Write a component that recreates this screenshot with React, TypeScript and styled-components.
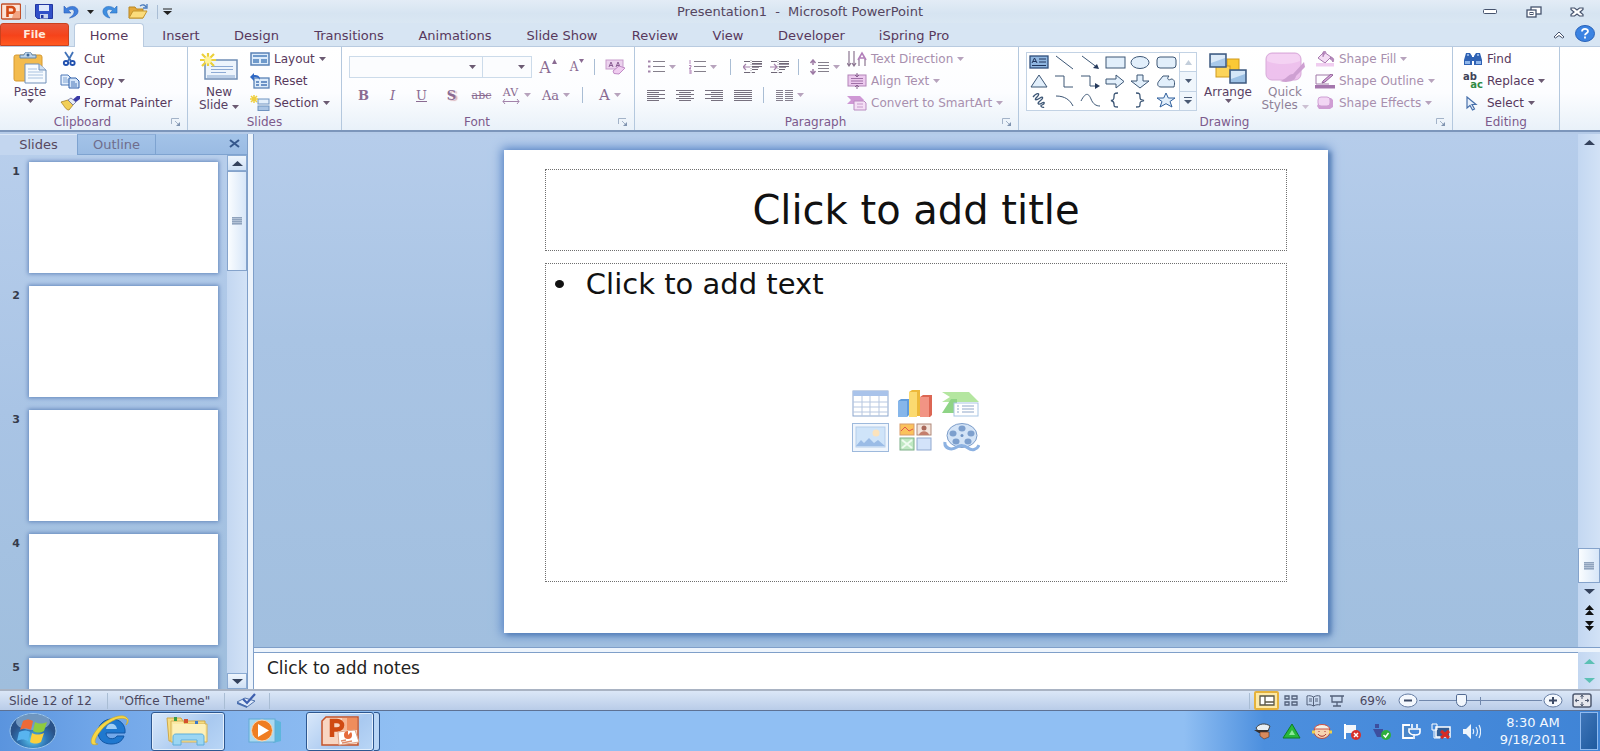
import React from 'react';
import styled, { createGlobalStyle, css } from 'styled-components';

const GlobalStyle = createGlobalStyle`
  * { box-sizing: border-box; }
  body { margin: 0; font-family: "DejaVu Sans", Verdana, sans-serif; font-size: 12px; color: #573f63; }
  button, select, textarea, input { font: inherit; color: inherit; margin: 0; }
  button { border: 0; padding: 0; background: none; cursor: pointer; }
`;

/* ---------- shell ---------- */

const Window = styled.div`
  display: flex;
  flex-direction: column;
  height: 100vh;
  min-height: 560px;
  overflow: hidden;
  background: #d5e4f2;
`;

const TitleBar = styled.header`
  display: grid;
  grid-template-columns: 1fr auto 1fr;
  align-items: center;
  flex: none;
  height: 23px;
  background: linear-gradient(#e3ecf6, #d6e4f1 60%, #dae7f3);
`;

const QuickAccess = styled.div`
  display: flex;
  align-items: center;
`;

const QuickButton = styled.button<{ $w: number }>`
  display: flex;
  align-items: center;
  justify-content: center;
  width: ${p => p.$w}px;
  height: 22px;
`;

const Divider = styled.span<{ $h?: number; $m?: number }>`
  flex: none;
  width: 1px;
  height: ${p => p.$h ?? 16}px;
  margin: 0 ${p => p.$m ?? 4}px;
  background: #a9bdd4;
`;

const WindowTitle = styled.h1`
  margin: 0;
  font-size: 13px;
  font-weight: normal;
  white-space: pre;
  color: #54455f;
`;

const Caption = styled.div`
  display: flex;
  justify-content: flex-end;
  padding-right: 3px;
`;

/* ---------- tabs ---------- */

const TabRow = styled.nav`
  display: flex;
  flex: none;
  height: 24px;
  background: #d7e5f3;
  border-bottom: 1px solid #b9cbe0;
`;

const FileTab = styled.button`
  width: 69px;
  height: 23px;
  margin-right: 5px;
  color: #ffe9dc;
  font-weight: bold;
  font-size: 11px;
  border: 1px solid #c9421f;
  border-radius: 3px 3px 0 0;
  background: linear-gradient(#e9573a, #f6431a 55%, #ff5a22);
`;

const Tab = styled.button<{ $w: number; $active?: boolean }>`
  width: ${p => p.$w}px;
  height: 24px;
  border-radius: 4px 4px 0 0;
  font-size: 13px;
  color: #57385c;
  ${p => p.$active && css`
    background: #fff;
    border: 1px solid #b9cbe0;
    border-bottom: 0;
  `}
`;

const TabTools = styled.div`
  display: flex;
  align-items: center;
  gap: 10px;
  margin-left: auto;
  padding-right: 5px;
`;

/* ---------- ribbon ---------- */

const Ribbon = styled.section`
  display: flex;
  flex: none;
  height: 85px;
  background: linear-gradient(#fff, #fcfdff 55%, #e9f1f9);
  border-bottom: 2px solid #7c96bb;
`;

const Group = styled.div<{ $w: number }>`
  display: flex;
  flex-direction: column;
  flex: none;
  width: ${p => p.$w}px;
  border-right: 1px solid #b4c8de;
`;

const GroupBody = styled.div<{ $pad?: number }>`
  display: flex;
  flex: 1;
  min-height: 0;
  padding: 1px 0 0 ${p => p.$pad ?? 0}px;
`;

const GroupFooter = styled.div`
  display: flex;
  align-items: center;
  height: 16px;
  color: #7c5a8c;
`;

const GroupName = styled.span`
  flex: 1;
  text-align: center;
`;

const Launcher = styled.button`
  display: flex;
  justify-content: center;
  width: 22px;
`;

const BigButton = styled.button<{ $w: number; $off?: boolean }>`
  display: flex;
  flex-direction: column;
  align-items: center;
  width: ${p => p.$w}px;
  padding-top: 2px;
  line-height: 13px;
  white-space: nowrap;
  opacity: ${p => (p.$off ? 0.65 : 1)};
`;

const BigIcon = styled.span`
  display: flex;
  align-items: center;
  justify-content: center;
  height: 36px;
`;

const Stack = styled.div<{ $indent?: number }>`
  display: flex;
  flex-direction: column;
  padding-left: ${p => p.$indent ?? 0}px;
`;

const RowButton = styled.button<{ $off?: boolean }>`
  display: flex;
  align-items: center;
  gap: 4px;
  height: 22px;
  white-space: nowrap;
  color: ${p => (p.$off ? '#a88fae' : '#57385c')};
`;

const ToolRows = styled.div<{ $w: number }>`
  display: flex;
  flex-direction: column;
  width: ${p => p.$w}px;
  padding-top: 6px;
  gap: 2px;
`;

const ToolRow = styled.div`
  display: flex;
  align-items: center;
  height: 26px;
`;

const Tool = styled.button<{ $w: number }>`
  display: flex;
  align-items: center;
  justify-content: center;
  gap: 4px;
  width: ${p => p.$w}px;
  height: 24px;
  color: #8a6b92;
`;

const FontSizeTool = styled(Tool)`
  gap: 1px;
  svg { align-self: flex-start; margin-top: 4px; }
`;

const Letter = styled.span<{ $size?: number; $bold?: boolean; $italic?: boolean; $line?: string; $shadow?: boolean }>`
  font-family: "DejaVu Serif", serif;
  font-size: ${p => p.$size ?? 13}px;
  font-weight: ${p => (p.$bold ? 'bold' : 'normal')};
  font-style: ${p => (p.$italic ? 'italic' : 'normal')};
  text-decoration: ${p => p.$line ?? 'none'};
  text-shadow: ${p => (p.$shadow ? '2px 1px 1px #d8b0b8' : 'none')};
`;

const SpacingGlyph = styled.span`
  display: flex;
  flex-direction: column;
  align-items: center;
  line-height: 12px;
`;

const Combo = styled.label<{ $w: number }>`
  position: relative;
  display: flex;
  align-items: center;
  width: ${p => p.$w}px;
  height: 22px;
  border: 1px solid #ccdbea;
  background: #fbfcfe;
  & + & { border-left: 0; }
  select {
    appearance: none;
    width: 100%;
    height: 20px;
    border: 0;
    background: none;
    outline: 0;
  }
  svg { position: absolute; right: 6px; pointer-events: none; }
`;

const Gallery = styled.div`
  display: flex;
  flex: none;
  width: 171px;
  height: 59px;
  margin-top: 4px;
  border: 1px solid #c2d2e4;
  background: #fff;
`;

const GalleryGrid = styled.div`
  display: grid;
  flex: 1;
  grid-template-columns: repeat(6, 1fr);
  grid-template-rows: repeat(3, 1fr);
`;

const GalleryCell = styled.button`
  display: flex;
  align-items: center;
  justify-content: center;
`;

const GalleryNav = styled.div`
  display: flex;
  flex-direction: column;
  width: 17px;
  border-left: 1px solid #c2d2e4;
  button {
    display: flex;
    flex: 1;
    align-items: center;
    justify-content: center;
  }
  button + button { border-top: 1px solid #c2d2e4; background: #f0f6fc; }
`;

/* ---------- workspace ---------- */

const Workspace = styled.main`
  display: flex;
  flex: 1;
  min-height: 0;
  padding-top: 2px;
  background: #b5cbe8;
`;

const SidePanel = styled.aside`
  display: flex;
  flex-direction: column;
  flex: none;
  width: 248px;
  border-right: 1px solid #7f9fc9;
  background: linear-gradient(#b9cfec, #a9c4e5 50%, #9fbedd);
`;

const SideTabs = styled.div`
  display: flex;
  flex: none;
  height: 21px;
`;

const SideTab = styled.button<{ $w: number; $active?: boolean }>`
  width: ${p => p.$w}px;
  font-size: 13px;
  line-height: 16px;
  color: ${p => (p.$active ? '#57485f' : '#6f6d8c')};
  ${p => p.$active
    ? css`background: #c3d6ef; border-top: 1px solid #dbe7f6;`
    : css`background: linear-gradient(#a3c3e8, #9abbe3); border: 1px solid #7ea3d0; border-top-color: #8fb0da;`}
`;

const SideTabFill = styled.div`
  display: flex;
  flex: 1;
  align-items: center;
  justify-content: flex-end;
  padding-right: 7px;
  background: linear-gradient(#a3c3e8, #9abbe3);
  border-bottom: 1px solid #7ea3d0;
`;

const SideBody = styled.div`
  display: flex;
  flex: 1;
  min-height: 0;
`;

const Thumbs = styled.ol`
  flex: 1;
  margin: 0;
  padding: 7px 9px 0 0;
  list-style: none;
  overflow: hidden;
`;

const ThumbItem = styled.li`
  display: flex;
  align-items: flex-start;
  margin-bottom: 13px;
`;

const ThumbNumber = styled.span`
  width: 29px;
  padding: 2px 9px 0 0;
  text-align: right;
  font-weight: bold;
  font-size: 11px;
  line-height: 16px;
  color: #363b4c;
`;

const Thumb = styled.button`
  flex: 1;
  height: 111px;
  background: #fff;
  box-shadow: 0 0 4px 1px #6488bd;
`;

const ScrollTrack = styled.div<{ $w: number }>`
  display: flex;
  flex-direction: column;
  align-items: stretch;
  flex: none;
  width: ${p => p.$w}px;
  background: linear-gradient(90deg, #c3d7f1, #d2e2f6);
`;

const ScrollButton = styled.button<{ $boxed?: boolean; $h?: number }>`
  display: flex;
  align-items: center;
  justify-content: center;
  flex: none;
  height: ${p => p.$h ?? 16}px;
  ${p => p.$boxed && css`
    border: 1px solid #8aaad2;
    background: linear-gradient(#eef5fd, #cfe0f5);
  `}
`;

const ScrollThumb = styled.div<{ $h: number }>`
  display: flex;
  align-items: center;
  justify-content: center;
  flex: none;
  height: ${p => p.$h}px;
  border: 1px solid #85a3cb;
  background: linear-gradient(90deg, #fafdff, #d7e6f8);
`;

const Grip = styled.span`
  width: 10px;
  height: 8px;
  background: repeating-linear-gradient(#8fa3bd 0 1px, #b3c2d6 1px 2px);
`;

const Spacer = styled.div`
  flex: 1;
`;

const Editor = styled.div`
  display: flex;
  flex-direction: column;
  flex: 1;
  min-width: 0;
  margin-left: 5px;
  border-left: 1px solid #7f9fc9;
  box-shadow: -5px 0 0 #edf4fc;
`;

const CanvasRow = styled.div`
  display: flex;
  flex: 1;
  min-height: 0;
`;

const Canvas = styled.div`
  display: flex;
  flex: 1;
  justify-content: center;
  padding: 16px 0 14px;
  background: linear-gradient(#b6cdeb, #a9c4e4 40%, #a1bfdf);
`;

const Slide = styled.article`
  display: flex;
  flex-direction: column;
  gap: 12px;
  height: 100%;
  aspect-ratio: 826 / 484;
  padding: 19px 41px 51px;
  background: #fff;
  box-shadow: 0 0 10px 2px #5684c6, 3px 2px 4px #5f7fa8;
`;

const TitlePlaceholder = styled.h2`
  display: flex;
  align-items: center;
  justify-content: center;
  flex: none;
  height: 82px;
  margin: 0;
  border: 1px dotted #6f6f6f;
  font-size: 40px;
  font-weight: normal;
  color: #111;
`;

const BodyPlaceholder = styled.div`
  display: flex;
  flex-direction: column;
  flex: 1;
  border: 1px dotted #6f6f6f;
  color: #111;
`;

const Bullets = styled.ul`
  margin: 0;
  padding: 0 0 0 9px;
  list-style: none;
  font-size: 29px;
  line-height: 40px;
  li { display: flex; align-items: center; gap: 22px; }
  li::before { content: ''; width: 9px; height: 8px; border-radius: 50%; background: #111; }
`;

const InsertGrid = styled.div`
  display: grid;
  grid-template-columns: repeat(3, 45px);
  grid-template-rows: repeat(2, 34px);
  align-self: center;
  margin-top: 83px;
  button { display: flex; align-items: center; justify-content: center; }
`;

const NotesRow = styled.div`
  display: flex;
  flex: none;
  height: 42px;
  border-top: 1px solid #7f9fc9;
  background: #edf4fc;
  padding-top: 4px;
`;

const Notes = styled.textarea`
  flex: 1;
  padding: 5px 13px;
  border: 0;
  border-top: 1px solid #7f9fc9;
  outline: 0;
  resize: none;
  overflow: hidden;
  background: #fff;
  color: #222;
  font-size: 17px;
  line-height: 21px;
`;

/* ---------- status bar ---------- */

const StatusBar = styled.footer`
  display: flex;
  align-items: center;
  flex: none;
  height: 22px;
  padding-left: 9px;
  border-top: 2px solid #a9b3c3;
  border-bottom: 1px solid #5d7193;
  background: linear-gradient(#dbe7f7, #b9cce8);
  color: #4a4760;
`;

const StatusText = styled.span<{ $w: number; $indent?: number }>`
  width: ${p => p.$w}px;
  padding-left: ${p => p.$indent ?? 0}px;
  white-space: nowrap;
`;

const StatusButton = styled.button<{ $w: number; $active?: boolean }>`
  display: flex;
  align-items: center;
  justify-content: center;
  width: ${p => p.$w}px;
  height: 19px;
  font-size: 12px;
  ${p => p.$active && css`
    border: 2px solid #e5b23c;
    border-radius: 2px;
    background: #fde9a6;
  `}
`;

const Zoom = styled.input`
  appearance: none;
  width: 123px;
  height: 14px;
  background: linear-gradient(#7188ad, #7188ad) center / 100% 1px no-repeat,
    linear-gradient(#7188ad, #7188ad) center / 1px 8px no-repeat;
  &::-webkit-slider-thumb {
    appearance: none;
    width: 11px;
    height: 13px;
    border: 1px solid #536b93;
    border-radius: 2px 2px 6px 6px;
    background: #f2f7fd;
  }
`;

/* ---------- taskbar ---------- */

const Taskbar = styled.footer`
  display: flex;
  align-items: center;
  flex: none;
  height: 40px;
  background: linear-gradient(90deg, #5a94de 0, #6fa5e8 90px, #86b6ef 240px, #90bff3 400px, #90bff3 74%, #4c8fde 79%, #3f84d6 100%);
`;

const TaskButton = styled.button<{ $w: number; $open?: boolean }>`
  display: flex;
  align-items: center;
  justify-content: center;
  flex: none;
  width: ${p => p.$w}px;
  height: 39px;
  ${p => p.$open && css`
    border: 1px solid #2d5790;
    border-radius: 3px;
    background: linear-gradient(135deg, #d9e8fa, #a9c9f0 60%, #b9d6f6);
    box-shadow: inset 0 0 0 1px #e3effc;
  `}
`;

const StackEdge = styled.span`
  width: 6px;
  height: 39px;
  border: 1px solid #2d5790;
  border-left: 0;
  border-radius: 0 3px 3px 0;
  background: #b9d6f6;
`;

const Tray = styled.div`
  display: flex;
  align-items: center;
  margin-left: auto;
`;

const Clock = styled.time`
  width: 94px;
  text-align: center;
  line-height: 17px;
  font-size: 13px;
  color: #f4f9ff;
  span { display: block; }
`;

const ShowDesktop = styled.button`
  width: 18px;
  height: 38px;
  margin-right: 2px;
  border: 1px solid #8fbaf0;
  background: linear-gradient(120deg, #3f76b9, #1f5a9f);
`;

/* ---------- icons ---------- */

const Svg = styled.svg`
  flex: none;
  fill: none;
`;

type IconProps = { w: number; h: number; children: React.ReactNode };
const Icon = ({ w, h, children }: IconProps) => (
  <Svg width={w} height={h} viewBox={`0 0 ${w} ${h}`} aria-hidden="true">{children}</Svg>
);

const Down = ({ c = '#6b5a72' }: { c?: string }) => <Icon w={7} h={4}><path d="M0 0h7L3.500 4z" fill={c} /></Icon>;
const Up = ({ c = '#34425c', w = 11 }: { c?: string; w?: number }) => (
  <Icon w={w} h={5}><path d={`M0 5h${w}L${w / 2} 0z`} fill={c} /></Icon>
);
const DownWide = ({ c = '#34425c' }: { c?: string }) => <Icon w={11} h={5}><path d="M0 0h11L5.500 5z" fill={c} /></Icon>;

const AppIcon = () => (
  <Icon w={20} h={17}>
    <rect x=".5" y="1" width="19" height="15" rx="1" fill="#fbe3d6" stroke="#c2512a" strokeWidth="1.300" />
    <path d="M13 8h6v7h-8z" fill="#f3a583" />
    <path d="M6.500 14V4h4a3 2.800 0 0 1 0 5.800H7" stroke="#d24a16" strokeWidth="2.600" />
  </Icon>
);
const SaveIcon = () => (
  <Icon w={18} h={15}>
    <path d="M.5.5h17v14h-15l-2-2z" fill="#3150c8" stroke="#2337a0" />
    <path d="M4 1h10v6H4z" fill="#dfe9fb" /><path d="M5 10h8v4.500H5z" fill="#c9d4ee" /><path d="M6 11h2.500v3H6z" fill="#2337a0" />
  </Icon>
);
const UndoIcon = () => (
  <Icon w={16} h={14}><path d="M1 1v7h7L5.500 5.500C9 3 12 5 11 8c-.6 2-2.500 3.500-4.500 5C12 12 15.500 9 15 5.500 14 1 8 0 3.500 3.500z" fill="#3f7fdc" stroke="#2a5cb8" strokeWidth=".6" /></Icon>
);
const RedoIcon = () => (
  <Icon w={16} h={14}><path d="M15 1v7H8l2.500-2.500C7 3 4 5 5 8c.6 2 1.500 3 3 5C3 12 .5 9 1 5.500 2 1 8 0 12.500 3.500z" fill="#3f8fe0" stroke="#2a6cc0" strokeWidth=".6" /></Icon>
);
const OpenIcon = () => (
  <Icon w={21} h={15}>
    <path d="M1 14V3h6l1.500 2H15v9z" fill="#e3a93c" stroke="#b98722" /><path d="M1 14l4-7h14l-4 7z" fill="#fbdc7c" stroke="#c4952d" />
    <path d="M12 2c3-2 5-1 6 1M19 0v4h-4" stroke="#4a7bbd" strokeWidth="1.300" />
  </Icon>
);
const PasteIcon = () => (
  <Icon w={34} h={32}>
    <rect x="1" y="3" width="28" height="26" rx="2" fill="#f3bb4e" stroke="#d79a31" />
    <path d="M7 6V3h4c0-4 8-4 8 0h4v3z" fill="#bcd4ea" stroke="#5f84ab" /><circle cx="15" cy="3" r="1.500" fill="#3f6797" />
    <path d="M12 12h14l7 6v13H12z" fill="#f7fbff" stroke="#6f8fb9" /><path d="M26 12v6h7" fill="#cfe0f3" stroke="#6f8fb9" />
    <path d="M15 17h9M15 20h15M15 23h15M15 26h15" stroke="#a8c1df" />
  </Icon>
);
const CutIcon = () => (
  <Icon w={20} h={16}>
    <path d="M5 1l6 9M13 1L8 10" stroke="#4172b8" strokeWidth="1.800" />
    <ellipse cx="6" cy="12" rx="2.200" ry="2" stroke="#1f4fae" strokeWidth="1.800" /><ellipse cx="12.500" cy="12" rx="2.200" ry="2" stroke="#1f4fae" strokeWidth="1.800" />
  </Icon>
);
const CopyIcon = () => (
  <Icon w={20} h={15}>
    <path d="M1 1h7l3 3v7H1z" fill="#e4effc" stroke="#4d79b8" /><path d="M3 4h4M3 6h6M3 8h6" stroke="#7fa3d3" />
    <path d="M9 4h7l3 3v7H9z" fill="#d3e4f8" stroke="#2f5ea8" /><path d="M11 8h4M11 10h6M11 12h6" stroke="#4d79b8" />
  </Icon>
);
const BrushIcon = () => (
  <Icon w={20} h={15}>
    <path d="M1 6l7-2 5 5-4 5C6 14 5 11 1 6z" fill="#f2cf57" stroke="#a98226" strokeWidth=".8" />
    <path d="M8 4l3-2 5 4-3 3z" fill="#e7ecf5" stroke="#6b6f94" strokeWidth=".8" /><path d="M13 3.500L17 0h3v3l-4 3z" fill="#3a3aa6" />
  </Icon>
);
const NewSlideIcon = () => (
  <Icon w={38} h={30}>
    <rect x="5" y="7" width="32" height="19" fill="#edf4fc" stroke="#6f8db5" strokeWidth="1.500" /><path d="M7 22h28v3H7z" fill="#b9cde6" />
    <path d="M11 13.500h22M11 16.500h22M11 19.500h15" stroke="#8daad4" />
    <path d="M8 0v13M0 7h16M2 1l12 12M14 1L2 13" stroke="#ecd03a" strokeWidth="2.200" /><circle cx="8" cy="7" r="3.500" fill="#fff39a" />
  </Icon>
);
const LayoutIcon = () => (
  <Icon w={20} h={14}><rect x="1" y="1" width="18" height="12" fill="#dcebfa" stroke="#5982b6" strokeWidth="1.500" /><path d="M3 3h14v2H3zM3 7h6v4H3zM11 7h6v4h-6z" fill="#6f9acb" /></Icon>
);
const ResetIcon = () => (
  <Icon w={20} h={16}><rect x="4" y="5" width="15" height="10" fill="#dcebfa" stroke="#5982b6" strokeWidth="1.300" /><path d="M6 9h3M11 9h6M6 12h3M11 12h6" stroke="#4675b5" strokeWidth="1.500" /><path d="M0 4l4-4v2c4 0 6 1 6 5-1-2-3-3-6-2.500V8z" fill="#2f68c4" /></Icon>
);
const SectionIcon = () => (
  <Icon w={20} h={16}><rect x="8" y="4" width="11" height="5" fill="#e3effb" stroke="#6f93c0" /><rect x="8" y="11" width="11" height="4.500" fill="#a9c4e4" stroke="#6f93c0" /><path d="M4 0v8M0 4h8M1 1l6 6M7 1L1 7" stroke="#f0cf3e" strokeWidth="1.500" /></Icon>
);
const LauncherIcon = () => (
  <Icon w={10} h={8}><path d="M.5 6V.5H8" stroke="#a3b3c8" /><path d="M4 3l3 3" stroke="#a3b3c8" /><path d="M9 4v4H5z" fill="#8094b0" /></Icon>
);
const ClearIcon = () => (
  <Icon w={22} h={17}>
    <rect x="1" y="1" width="17" height="9" fill="#ecd3ee" stroke="#c79bcc" /><path d="M4 8l2-5 2 5M4.500 6.500h3M11 8l2-5 2 5M11.500 6.500h3" stroke="#8a5d93" />
    <path d="M8 12l6-5 6 2-6 6-5-.5z" fill="#f0cdf0" stroke="#c08bc6" />
  </Icon>
);

const lines = (rows: [number, number, number][], c = '#85808c') =>
  rows.map(([x, y, len], i) => <path key={i} d={`M${x} ${y}.5h${len}`} stroke={c} />);

const BulletIcon = () => (
  <Icon w={18} h={14}>{lines([[6, 1, 12], [6, 6, 12], [6, 11, 12]])}<path d="M1 1.500h2.500M1 6.500h2.500M1 11.500h2.500" stroke="#a283aa" strokeWidth="2" /></Icon>
);
const NumberIcon = () => (
  <Icon w={18} h={14}>{lines([[6, 1, 12], [6, 6, 12], [6, 11, 12]])}<path d="M2 0v4M1 5.500h2v1.500l-2 1.500h2M1 10h2v4H1M1 12h2" stroke="#b58abb" /></Icon>
);
const IndentIcon = ({ right }: { right?: boolean }) => (
  <Icon w={20} h={14}>
    {lines([[1, 1, 6], [9, 1, 10], [9, 3, 10], [9, 6, 10], [9, 9, 6], [1, 12, 6], [9, 12, 3]], '#6f6877')}
    <path d="M9 4.500h10M9 7.500h7" stroke="#9c94a3" />
    <path d={right ? 'M0 7h6M4 4l3 3-3 3' : 'M7 7H1M3 4L0 7l3 3'} stroke="#a27fa9" strokeWidth="1.200" /><path d="M8 0v14" stroke="#a8a2b0" strokeDasharray="1 1" />
  </Icon>
);
const LineSpaceIcon = () => (
  <Icon w={20} h={16}>{lines([[9, 3, 11], [9, 6, 11], [9, 9, 11], [9, 12, 11]])}<path d="M4 1v5M4 10v5M1.500 4L4 1l2.500 3M1.500 12L4 15l2.500-3" stroke="#9d7aa5" strokeWidth="1.500" /></Icon>
);
const AlignIcon = ({ kind }: { kind: 'l' | 'c' | 'r' | 'j' }) => (
  <Icon w={18} h={11}>
    {[0, 1, 2, 3, 4, 5].map(i => {
      const len = kind === 'j' || i % 2 === 0 ? 18 : 12;
      const x = kind === 'c' ? (18 - len) / 2 : kind === 'r' ? 18 - len : 0;
      return <path key={i} d={`M${x} ${i * 2}.5h${len}`} stroke="#77717f" />;
    })}
  </Icon>
);
const ColumnsIcon = () => (
  <Icon w={17} h={11}>{[0, 2, 4, 6, 8, 10].map(y => <path key={y} d={`M0 ${y}.5h7M9 ${y}.5h8`} stroke="#857f8d" />)}</Icon>
);
const TextDirIcon = () => (
  <Icon w={20} h={16}><path d="M2 0v14M7 0v14M0 12l2 3 2-3M5 12l2 3 2-3M12 15V8M18 15V8" stroke="#8b7691" strokeWidth="1.200" /><path d="M11 9l4-7 4 7M12.500 7h5" stroke="#b27fba" strokeWidth="1.600" /></Icon>
);
const AlignTextIcon = () => (
  <Icon w={20} h={16}><rect x="1" y="2" width="18" height="11" fill="#ecc9ee" stroke="#b184b8" /><path d="M4 5.500h12M4 8h12M4 10.500h12" stroke="#9f71a7" /><path d="M10 0v3M10 12v4M8 2l2 2 2-2M8 14l2-2 2 2" stroke="#87608f" /></Icon>
);
const SmartArtIcon = () => (
  <Icon w={20} h={16}><path d="M0 1h13l4 4-4 4H0l4-4z" fill="#cf98d5" /><path d="M7 6h10l2 2v7H7z" fill="#f4dff5" stroke="#b98bc0" /><path d="M10 9h6M10 12h6" stroke="#c59acb" /></Icon>
);
const ArrangeIcon = () => (
  <Icon w={38} h={31}>
    <rect x="18" y="6" width="12" height="12" fill="#fbc935" stroke="#cf9a1e" /><rect x="7" y="13" width="14" height="11" fill="#fcd45a" stroke="#cf9a1e" />
    <rect x="1" y="1" width="16" height="13" fill="#a9c9ea" stroke="#3d587f" strokeWidth="1.500" /><path d="M2 2h14v3L2 10z" fill="#dceaf8" />
    <rect x="21" y="17" width="16" height="13" fill="#9cc0e4" stroke="#3d587f" strokeWidth="1.500" /><path d="M22 18h14v3l-14 5z" fill="#d5e6f7" />
  </Icon>
);
const QuickIcon = () => (
  <Icon w={40} h={32}><rect x="1" y="1" width="35" height="27" rx="6" fill="#e6a2e4" stroke="#c47fc6" /><path d="M2 9c8 4 24 4 33 0V7c0-3-2-5-5-5H8C4 2 2 4 2 7z" fill="#efbcee" /><path d="M39 10L28 22l3 2 9-9zM28 22c-5 0-6 5-13 7 6 2 15 1 16-5z" fill="#b56fbb" /></Icon>
);
const FillIcon = () => (
  <Icon w={20} h={16}><path d="M9 1l7 5-6 6-7-5z" fill="#f3dcf4" stroke="#a779ae" /><path d="M8 6V1.500C8 0 11 0 11 1.500M16 6c3 1 3 3 2 5-1-2-2-3-3-3z" stroke="#a779ae" fill="#b98bc0" /><path d="M1 12h18v3.500H1z" fill="#f0cdf0" /></Icon>
);
const OutlineIcon = () => (
  <Icon w={20} h={15}><path d="M15 1H1v9h13" stroke="#a27aa9" /><path d="M18 1l-8 7-3 1 1-2 8-7z" fill="#d7a5dc" stroke="#8f6396" /><path d="M0 11h20v3.500H0z" fill="#a476ad" /></Icon>
);
const EffectsIcon = () => (
  <Icon w={20} h={14}><path d="M6 2h10l2 2v7l-3 2H4l-2-3z" fill="#cf9dd4" /><rect x="3" y="1" width="12" height="9" rx="3" fill="#f2d6f4" stroke="#cfa0d4" /></Icon>
);
const FindIcon = () => (
  <Icon w={20} h={14}>
    <path d="M3 1h4l2 3v9H1V8zM13 1h4l2 7v5h-8V4z" fill="#2f62b4" /><path d="M8 5h4v4H8z" fill="#2f62b4" />
    <path d="M2 9h5v3H2zM13 9h5v3h-5z" fill="#8fb6ea" /><path d="M4 3h2M14 3h2" stroke="#a9c8f0" strokeWidth="1.500" />
  </Icon>
);
const SelectIcon = () => (
  <Icon w={20} h={15}><path d="M4 1v11l3-2.500L9.500 14l2-1-2.500-4.500h4z" fill="#e9f1fb" stroke="#4770ab" strokeWidth="1.200" /></Icon>
);

const ReplaceGlyph = styled.span`
  display: flex;
  flex-direction: column;
  align-items: flex-end;
  width: 20px;
  font-size: 10px;
  font-weight: bold;
  line-height: 8px;
  color: #3f4258;
  span:first-child { align-self: flex-start; }
  span:last-child { color: #2f8a43; }
`;

const st = { stroke: '#3c5675', fill: '#e2effb' };
const shapes: [string, React.ReactNode][] = [
  ['Text box', <><rect x="1" y="2" width="18" height="12" fill="#8fb6e0" stroke="#2f4f7c" strokeWidth="1.300" /><path d="M3 9l2.500-5L8 9M4 7.500h3M10 5h7M10 8h7M3 11.500h14" stroke="#20355c" /></>],
  ['Line', <path d="M2 2l17 13" {...st} />],
  ['Arrow', <><path d="M2 2l16 12" {...st} /><path d="M19 15l-6-1 4-4z" fill="#263a5c" /></>],
  ['Rectangle', <rect x="1" y="3" width="19" height="11" {...st} />],
  ['Oval', <ellipse cx="10" cy="8.500" rx="9" ry="6" {...st} />],
  ['Rounded rectangle', <rect x="1" y="3" width="19" height="11" rx="3" {...st} />],
  ['Triangle', <path d="M10 2l8 12H2z" {...st} />],
  ['Elbow connector', <path d="M1 3h9v11h9" {...st} fill="none" />],
  ['Elbow arrow', <><path d="M1 3h9v10h7" {...st} fill="none" /><path d="M20 13l-5-3v6z" fill="#263a5c" /></>],
  ['Right arrow', <path d="M1 6h10V2l8 6.500-8 6.500v-4H1z" {...st} />],
  ['Down arrow', <path d="M7 2h6v6h6l-9 7-9-7h6z" {...st} />],
  ['Freeform', <path d="M5 14c-4 0-4-4-2-6l4-5h6c-3 3 0 5 2 3 4 0 4 4 3 8z" {...st} />],
  ['Scribble', <path d="M4 5c4-5 8-4 4 0-4 4 0 3 3 1s4 0 0 3-1 4 2 2 3 1 0 2 1 3 2 2" {...st} fill="none" strokeWidth="1.300" />],
  ['Arc', <path d="M2 4c9 0 14 4 17 10" {...st} fill="none" />],
  ['Curve', <path d="M1 9c5-10 8-7 10-2s5 7 9 7" {...st} fill="none" />],
  ['Left brace', <path d="M13 1c-4 0-4 1-4 4s-1 3-3 3.500c2 .5 3 1 3 3.500s0 3 4 3" {...st} fill="none" strokeWidth="1.300" />],
  ['Right brace', <path d="M6 1c4 0 4 1 4 4s1 3 4 3.500c-3 .5-4 1-4 3.500s0 3-4 3" {...st} fill="none" strokeWidth="1.300" />],
  ['Star', <path d="M10 1l2.300 5H19l-5 3.500 2 5.500-6-3.300L4 15l2-5.500L1 6h6.700z" fill="#e2effb" stroke="#2f5f9c" />],
];

const inserts: [string, React.ReactNode][] = [
  ['Insert table', <><rect x="1" y="2" width="35" height="25" fill="#fff" stroke="#8ba6cd" /><path d="M1 2h35v5H1z" fill="#a9c3ea" /><path d="M1 13h35M1 18h35M1 23h35M10 7v20M18 7v20M27 7v20" stroke="#b7c7e0" /></>],
  ['Insert chart', <><path d="M1 12l3-2h8v16l-2 2H1z" fill="#5f9bdc" /><path d="M1 12h9v16H1z" fill="#86b6ea" /><path d="M12 3l3-2h8v26H12z" fill="#edb93a" /><path d="M12 3h8v25h-8z" fill="#fbda70" /><path d="M23 8l3-2h9v20l-2 2H23z" fill="#dc6653" /><path d="M23 8h9v20h-9z" fill="#f29484" /></>],
  ['Insert SmartArt graphic', <><path d="M0 3h27l10 10H0l8-5z" fill="#b4e6a0" /><path d="M0 24l9-14h6v14z" fill="#8fd486" /><rect x="12" y="14" width="24" height="13" fill="#fff" stroke="#a9c6e4" /><path d="M15 17h2M15 20h2M15 23h2M20 17h12M20 20h12M20 23h12" stroke="#8fa6c8" /></>],
  ['Insert picture', <><rect x=".5" y=".5" width="36" height="28" fill="#f0f6fd" stroke="#9db9dc" /><rect x="4" y="4" width="29" height="20" fill="#cfe4f9" stroke="#b5cdea" /><circle cx="24" cy="10" r="3.500" fill="#fbe3bd" /><path d="M4 23l5-6 3 3 5-5 5 5 4-3 7 6z" fill="#9bbce6" /></>],
  ['Insert clip art', <><rect x="3" y="1" width="14" height="11" fill="#fbc25c" stroke="#d79b6a" /><path d="M4 8l4-4 4 4 4-2" stroke="#e0574c" /><rect x="20" y="1" width="14" height="11" fill="#f3e4dc" stroke="#b08878" /><circle cx="27" cy="5" r="2.500" fill="#a9685a" /><path d="M22 12c1-5 9-5 10 0z" fill="#c47e6c" /><rect x="3" y="15" width="14" height="12" fill="#bfe8c2" stroke="#7fb08a" /><path d="M5 17l10 8M15 17L5 25" stroke="#eefbef" strokeWidth="2" /><rect x="20" y="15" width="14" height="12" fill="#d3e3fa" stroke="#90a8cf" /></>],
  ['Insert media clip', <><ellipse cx="20" cy="12.500" rx="15" ry="12" fill="#d3e3f6" stroke="#7d9dc9" /><g fill="#7d9fcd"><ellipse cx="20" cy="5.500" rx="3.500" ry="3" /><ellipse cx="11" cy="10.500" rx="3.500" ry="3" /><ellipse cx="29" cy="10.500" rx="3.500" ry="3" /><ellipse cx="14" cy="18.500" rx="3.500" ry="3" /><ellipse cx="26" cy="18.500" rx="3.500" ry="3" /></g><circle cx="20" cy="12.500" r="1.500" fill="#6f93c4" /><path d="M3 19c-1 6 6 9 12 5 3-2 7-2 11 1s9 2 11-3" stroke="#8db2e2" strokeWidth="3" /></>],
];

const StartIcon = () => (
  <Icon w={48} h={38}>
    <defs><radialGradient id="orb" cx="50%" cy="75%"><stop offset="0" stopColor="#5fd0f2" /><stop offset=".6" stopColor="#2f74b4" /><stop offset="1" stopColor="#2a5288" /></radialGradient></defs>
    <ellipse cx="24" cy="19" rx="23" ry="17.500" fill="url(#orb)" stroke="#9cc6ec" /><ellipse cx="24" cy="10" rx="17" ry="8" fill="#a7cdec" opacity=".55" />
    <path d="M14 9c4-2 7-2 10 0l-2 9c-4-2-7-2-11 0z" fill="#ee6a37" /><path d="M26 10c4 2 7 2 12 0l-3 9c-4 2-7 2-11 0z" fill="#8fcb3e" />
    <path d="M10 20c4-2 8-2 11 0l-2 9c-4-2-7-2-11 0z" fill="#58b4ef" /><path d="M23 21c4 2 7 2 12 0l-3 9c-4 2-7 2-11 0z" fill="#fbcf3c" />
  </Icon>
);
const IeIcon = () => (
  <Icon w={42} h={34}>
    <path d="M36 22c-2 6-7 8-13 8C15 30 10 25 10 18S16 5 24 5s14 6 13 14H18c0 7 9 7 11 3z" fill="#1f78cf" stroke="#1257a5" /><path d="M18 15h11c-1-7-10-7-11 0z" fill="#9ecdf5" />
    <path d="M38 3C32-1 15 6 7 18 1 27 2 33 10 30c-4 0-4-4 1-11C18 9 30 2 38 5c2 1 1 4 0 6 3-3 3-6 0-8z" fill="#f7d746" stroke="#c9a520" strokeWidth=".6" />
  </Icon>
);
const FolderIcon = () => (
  <Icon w={46} h={32}>
    <path d="M2 3h14l2 3h22v20H4z" fill="#f6dc82" stroke="#cfa848" /><path d="M6 6h12l2 3h22v18H6z" fill="#fbe9a4" stroke="#d6b257" /><path d="M8 9h32v16H8z" fill="#fdf0ba" />
    <path d="M9 2h3v4H9z" fill="#3a9b45" /><path d="M19 4h4v4h-4z" fill="#d5502c" /><path d="M30 6h3v3h-3z" fill="#3a78c9" />
    <path d="M8 30v-8c0-2 1-3 3-3h25c2 0 3 1 3 3v8h-7v-5H16v5z" fill="#9bd6f3" stroke="#5daedb" />
  </Icon>
);
const MediaIcon = () => (
  <Icon w={36} h={28}>
    <path d="M25 2l8 3v19l-8 2z" fill="#5db6dc" /><rect x="1" y="2" width="26" height="23" fill="#a9d9f1" stroke="#62acd4" />
    <circle cx="14" cy="13.500" r="10.500" fill="#ef7d22" stroke="#fbd6b0" /><path d="M10 7v13l11-6.500z" fill="#fff" />
  </Icon>
);
const PptIcon = () => (
  <Icon w={40} h={32}>
    <path d="M6 2h32v28H2V6z" fill="#f8d6c2" stroke="#c4532a" strokeWidth="1.500" /><path d="M22 3h15v12H22z" fill="#ef8d5d" /><path d="M22 3h5v12h-5z" fill="#f6b694" />
    <path d="M12 22V6h5a5 4.200 0 0 1 0 8.500h-5" stroke="#d04a12" strokeWidth="4.500" />
    <path d="M18 17l17-2 4 12-20 3z" fill="#fff" stroke="#e0a68a" /><circle cx="28" cy="20" r="4" fill="#e66b3c" /><path d="M28 20v-4h4z" fill="#fff" /><path d="M21 26l5-1M22 28l10-2" stroke="#e08b68" strokeWidth="1.500" />
  </Icon>
);

const tray: [string, number, React.ReactNode][] = [
  ['Pirate', 29, <><path d="M3 5c3-5 10-5 14-2l-2 5H5z" fill="#e8eef3" stroke="#444" /><path d="M1 7h15l-3 3H6z" fill="#35302e" /><path d="M7 9h9v5l-5 2-4-3z" fill="#d98a5c" stroke="#5b3424" strokeWidth=".6" /></>],
  ['Download', 30, <><path d="M10 1l8 14H1z" fill="#27b83b" stroke="#0e7d24" /><path d="M10 7l3 5H7z" fill="#8be89a" /></>],
  ['Messenger', 30, <><ellipse cx="10" cy="8.500" rx="8" ry="7" fill="#f6d3b0" stroke="#b54b42" /><path d="M2 6c2-6 14-6 16 0z" fill="#f3f0e6" stroke="#c8534a" /><path d="M6 11c2 3 6 3 8 0M7 8v1M13 8v1" stroke="#a33" /><path d="M0 9h3M17 9h3" stroke="#f0d04a" strokeWidth="3" /></>],
  ['Action Center', 30, <><path d="M3 1v15" stroke="#fff" strokeWidth="2" /><path d="M4 2h10v8H4z" fill="#f3f6fa" /><circle cx="14" cy="12" r="5" fill="#d8312b" /><path d="M12 10l4 4M16 10l-4 4" stroke="#fff" strokeWidth="1.500" /></>],
  ['Update', 29, <><path d="M3 1h4v4H3zM1 6h10v8H5z" fill="#3d4f9e" /><circle cx="14" cy="12" r="5" fill="#2eae3f" /><path d="M11.500 12l2 2 3-4" stroke="#fff" strokeWidth="1.500" /></>],
  ['Power', 30, <><path d="M9 2H2v13h10" fill="#4b87c9" stroke="#fff" strokeWidth="1.800" /><path d="M11 1v4M16 1v4M8 6h11v3c0 4-9 4-11 0zM13 11v5" stroke="#fff" strokeWidth="1.600" /></>],
  ['Network', 30, <><path d="M5 4h14v10H5z" fill="#315d94" stroke="#fff" strokeWidth="1.500" /><path d="M1 1h5v6H1zM3 7v8h6" stroke="#fff" /><path d="M10 8l8 7M18 8l-8 7" stroke="#d82a24" strokeWidth="3" /></>],
  ['Volume', 30, <><path d="M2 6h3l5-5v15l-5-5H2z" fill="#eef5fc" /><path d="M12 6c1 2 1 3 0 5M15 4c2 3 2 6 0 9M18 2c2 4 2 9 0 13" stroke="#e3effb" strokeWidth="1.200" /></>],
];

const tabs: [string, number][] = [
  ['Home', 70], ['Insert', 74], ['Design', 77], ['Transitions', 108], ['Animations', 104],
  ['Slide Show', 110], ['Review', 76], ['View', 70], ['Developer', 97], ['iSpring Pro', 108],
];

const OFF = '#b7a3bd';

const Footer = ({ name, launcher }: { name: string; launcher?: boolean }) => (
  <GroupFooter>
    <GroupName>{name}</GroupName>
    {launcher && <Launcher aria-label={`${name} options`}><LauncherIcon /></Launcher>}
  </GroupFooter>
);

const Row = ({ icon, label, menu, off }: { icon: React.ReactNode; label: string; menu?: boolean; off?: boolean }) => (
  <RowButton $off={off}>{icon}{label}{menu && <Down c={off ? OFF : undefined} />}</RowButton>
);

export default function App() {
  return (
    <>
      <GlobalStyle />
      <Window>
        <TitleBar>
          <QuickAccess>
            <QuickButton $w={21} aria-label="PowerPoint"><AppIcon /></QuickButton>
            <Divider $h={14} />
            <QuickButton $w={28} aria-label="Save"><SaveIcon /></QuickButton>
            <QuickButton $w={26} aria-label="Undo"><UndoIcon /></QuickButton>
            <QuickButton $w={12} aria-label="Undo history"><Down c="#222" /></QuickButton>
            <QuickButton $w={28} aria-label="Redo"><RedoIcon /></QuickButton>
            <QuickButton $w={29} aria-label="Open"><OpenIcon /></QuickButton>
            <Divider $h={14} />
            <QuickButton $w={11} aria-label="Customize toolbar">
              <Icon w={9} h={7}><path d="M0 1h9" stroke="#222" /><path d="M0 3h9L4.500 7z" fill="#222" /></Icon>
            </QuickButton>
          </QuickAccess>
          <WindowTitle>{'Presentation1  -  Microsoft PowerPoint'}</WindowTitle>
          <Caption>
            <QuickButton $w={42} aria-label="Minimize"><Icon w={14} h={5}><rect x=".5" y=".5" width="13" height="4" rx="1" fill="#fff" stroke="#46536d" /></Icon></QuickButton>
            <QuickButton $w={46} aria-label="Restore">
              <Icon w={16} h={12}><rect x="5" y="1" width="10" height="7" fill="#fff" stroke="#46536d" strokeWidth="1.300" /><rect x="1" y="4" width="9" height="7" fill="#fff" stroke="#46536d" strokeWidth="1.300" /><rect x="4" y="6.500" width="3" height="2" stroke="#46536d" /></Icon>
            </QuickButton>
            <QuickButton $w={40} aria-label="Close">
              <Icon w={14} h={10}><path d="M1 1h3.500L7 3l2.500-2H13v1.500L10 5l3 2.500V9H9.500L7 7 4.500 9H1V7.500L4 5 1 2.500z" fill="#fff" stroke="#46536d" strokeWidth="1.200" /></Icon>
            </QuickButton>
          </Caption>
        </TitleBar>

        <TabRow>
          <FileTab>File</FileTab>
          {tabs.map(([t, w]) => <Tab key={t} $w={w} $active={t === 'Home'}>{t}</Tab>)}
          <TabTools>
            <button aria-label="Minimize the ribbon"><Icon w={12} h={8}><path d="M1 6l5-5 5 5-1.500 1L6 4.500 2.500 7z" fill="#fff" stroke="#46536d" /></Icon></button>
            <button aria-label="Help"><Icon w={20} h={17}><ellipse cx="10" cy="8.500" rx="9.500" ry="8" fill="#3b83e2" stroke="#2a62b8" /><path d="M7 6.500C7 3 13 3 13 6.300c0 2-3 2-3 4M10 11.500v2" stroke="#fff" strokeWidth="1.800" /></Icon></button>
          </TabTools>
        </TabRow>

        <Ribbon>
          <Group $w={188}>
            <GroupBody>
              <BigButton $w={60}><BigIcon><PasteIcon /></BigIcon>Paste<Down /></BigButton>
              <Stack>
                <Row icon={<CutIcon />} label="Cut" />
                <Row icon={<CopyIcon />} label="Copy" menu />
                <Row icon={<BrushIcon />} label="Format Painter" />
              </Stack>
            </GroupBody>
            <Footer name="Clipboard" launcher />
          </Group>

          <Group $w={154}>
            <GroupBody>
              <BigButton $w={62}><BigIcon><NewSlideIcon /></BigIcon>New<span>Slide <Down /></span></BigButton>
              <Stack>
                <Row icon={<LayoutIcon />} label="Layout" menu />
                <Row icon={<ResetIcon />} label="Reset" />
                <Row icon={<SectionIcon />} label="Section" menu />
              </Stack>
            </GroupBody>
            <Footer name="Slides" />
          </Group>

          <Group $w={293}>
            <GroupBody $pad={7}>
              <ToolRows $w={285}>
                <ToolRow>
                  <Combo $w={134}><select aria-label="Font" /><Down /></Combo>
                  <Combo $w={49}><select aria-label="Font size" /><Down /></Combo>
                  <FontSizeTool $w={32} aria-label="Grow font"><Letter $size={16}>A</Letter><Up w={5} c="#8a6b92" /></FontSizeTool>
                  <FontSizeTool $w={26} aria-label="Shrink font"><Letter $size={12}>A</Letter><Icon w={5} h={4}><path d="M0 0h5L2.500 4z" fill="#8a6b92" /></Icon></FontSizeTool>
                  <Divider />
                  <Tool $w={34} aria-label="Clear formatting"><ClearIcon /></Tool>
                </ToolRow>
                <ToolRow>
                  <Tool $w={29} aria-label="Bold"><Letter $bold>B</Letter></Tool>
                  <Tool $w={29} aria-label="Italic"><Letter $italic>I</Letter></Tool>
                  <Tool $w={29} aria-label="Underline"><Letter $line="underline">U</Letter></Tool>
                  <Tool $w={31} aria-label="Shadow"><Letter $bold $shadow>S</Letter></Tool>
                  <Tool $w={29} aria-label="Strikethrough"><Letter $size={11} $line="line-through">abc</Letter></Tool>
                  <Tool $w={40} aria-label="Character spacing">
                    <SpacingGlyph><Letter $size={11}>AV</Letter><Icon w={18} h={5}><path d="M1 2.500h16M3 0L1 2.500 3 5M15 0l2 2.500L15 5" stroke="#a283aa" /></Icon></SpacingGlyph>
                    <Down c={OFF} />
                  </Tool>
                  <Tool $w={40} aria-label="Change case"><Letter>Aa</Letter><Down c={OFF} /></Tool>
                  <Divider $m={6} />
                  <Tool $w={42} aria-label="Font color"><Letter $size={15}>A</Letter><Down c={OFF} /></Tool>
                </ToolRow>
              </ToolRows>
            </GroupBody>
            <Footer name="Font" launcher />
          </Group>

          <Group $w={384}>
            <GroupBody $pad={6}>
              <ToolRows $w={206}>
                <ToolRow>
                  <Tool $w={40} aria-label="Bullets"><BulletIcon /><Down c={OFF} /></Tool>
                  <Tool $w={43} aria-label="Numbering"><NumberIcon /><Down c={OFF} /></Tool>
                  <Divider $m={6} />
                  <Tool $w={31} aria-label="Decrease indent"><IndentIcon /></Tool>
                  <Tool $w={24} aria-label="Increase indent"><IndentIcon right /></Tool>
                  <Divider $m={6} />
                  <Tool $w={38} aria-label="Line spacing"><LineSpaceIcon /><Down c={OFF} /></Tool>
                </ToolRow>
                <ToolRow>
                  <Tool $w={29} aria-label="Align left"><AlignIcon kind="l" /></Tool>
                  <Tool $w={29} aria-label="Center"><AlignIcon kind="c" /></Tool>
                  <Tool $w={29} aria-label="Align right"><AlignIcon kind="r" /></Tool>
                  <Tool $w={29} aria-label="Justify"><AlignIcon kind="j" /></Tool>
                  <Divider $m={6} />
                  <Tool $w={40} aria-label="Columns"><ColumnsIcon /><Down c={OFF} /></Tool>
                </ToolRow>
              </ToolRows>
              <Stack>
                <Row off icon={<TextDirIcon />} label="Text Direction" menu />
                <Row off icon={<AlignTextIcon />} label="Align Text" menu />
                <Row off icon={<SmartArtIcon />} label="Convert to SmartArt" menu />
              </Stack>
            </GroupBody>
            <Footer name="Paragraph" launcher />
          </Group>

          <Group $w={434}>
            <GroupBody $pad={7}>
              <Gallery>
                <GalleryGrid>
                  {shapes.map(([name, art]) => <GalleryCell key={name} aria-label={name}><Icon w={21} h={17}>{art}</Icon></GalleryCell>)}
                </GalleryGrid>
                <GalleryNav>
                  <button aria-label="Previous shapes"><Up w={7} c="#c3cedb" /></button>
                  <button aria-label="Next shapes"><Down c="#4a5a74" /></button>
                  <button aria-label="All shapes"><Icon w={8} h={7}><path d="M0 .5h8" stroke="#4a5a74" /><path d="M0 3h8L4 7z" fill="#4a5a74" /></Icon></button>
                </GalleryNav>
              </Gallery>
              <BigButton $w={62}><BigIcon><ArrangeIcon /></BigIcon>Arrange<Down /></BigButton>
              <BigButton $w={52} $off><BigIcon><QuickIcon /></BigIcon>Quick<span>Styles <Down c={OFF} /></span></BigButton>
              <Stack $indent={4}>
                <Row off icon={<FillIcon />} label="Shape Fill" menu />
                <Row off icon={<OutlineIcon />} label="Shape Outline" menu />
                <Row off icon={<EffectsIcon />} label="Shape Effects" menu />
              </Stack>
            </GroupBody>
            <Footer name="Drawing" launcher />
          </Group>

          <Group $w={107}>
            <GroupBody $pad={10}>
              <Stack>
                <Row icon={<FindIcon />} label="Find" />
                <Row icon={<ReplaceGlyph><span>ab</span><span>ac</span></ReplaceGlyph>} label="Replace" menu />
                <Row icon={<SelectIcon />} label="Select" menu />
              </Stack>
            </GroupBody>
            <Footer name="Editing" />
          </Group>
        </Ribbon>

        <Workspace>
          <SidePanel>
            <SideTabs>
              <SideTab $w={77} $active>Slides</SideTab>
              <SideTab $w={79}>Outline</SideTab>
              <SideTabFill><button aria-label="Close panel"><Icon w={11} h={9}><path d="M1 1l9 7M10 1L1 8" stroke="#36588c" strokeWidth="2" /></Icon></button></SideTabFill>
            </SideTabs>
            <SideBody>
              <Thumbs>
                {[1, 2, 3, 4, 5].map(n => (
                  <ThumbItem key={n}><ThumbNumber>{n}</ThumbNumber><Thumb aria-label={`Slide ${n}`} /></ThumbItem>
                ))}
              </Thumbs>
              <ScrollTrack $w={20}>
                <ScrollButton $boxed aria-label="Scroll up"><Up /></ScrollButton>
                <ScrollThumb $h={100}><Grip /></ScrollThumb>
                <Spacer />
                <ScrollButton $boxed aria-label="Scroll down"><DownWide /></ScrollButton>
              </ScrollTrack>
            </SideBody>
          </SidePanel>

          <Editor>
            <CanvasRow>
              <Canvas>
                <Slide>
                  <TitlePlaceholder>Click to add title</TitlePlaceholder>
                  <BodyPlaceholder>
                    <Bullets><li>Click to add text</li></Bullets>
                    <InsertGrid>
                      {inserts.map(([name, art]) => <button key={name} aria-label={name}><Icon w={38} h={30}>{art}</Icon></button>)}
                    </InsertGrid>
                  </BodyPlaceholder>
                </Slide>
              </Canvas>
              <ScrollTrack $w={22}>
                <ScrollButton aria-label="Scroll up"><Up /></ScrollButton>
                <Spacer />
                <ScrollThumb $h={35}><Grip /></ScrollThumb>
                <ScrollButton $h={17} aria-label="Scroll down"><DownWide /></ScrollButton>
                <ScrollButton $h={19} aria-label="Previous slide"><Icon w={9} h={10}><path d="M0 5h9L4.500 0zM0 10h9L4.500 5z" fill="#111" /></Icon></ScrollButton>
                <ScrollButton $h={28} aria-label="Next slide"><Icon w={9} h={24}><path d="M0 0h9L4.500 5zM0 5h9L4.500 10z" fill="#111" /></Icon></ScrollButton>
              </ScrollTrack>
            </CanvasRow>
            <NotesRow>
              <Notes aria-label="Notes" defaultValue="Click to add notes" />
              <ScrollTrack $w={22}>
                <ScrollButton $h={19} aria-label="Scroll notes up"><Up c="#5cc0b4" /></ScrollButton>
                <ScrollButton $h={18} aria-label="Scroll notes down"><DownWide c="#5cc0b4" /></ScrollButton>
              </ScrollTrack>
            </NotesRow>
          </Editor>
        </Workspace>

        <StatusBar>
          <StatusText $w={94}>Slide 12 of 12</StatusText>
          <Divider />
          <StatusText $w={108} $indent={7}>"Office Theme"</StatusText>
          <Divider />
          <StatusButton $w={36} aria-label="Spelling">
            <Icon w={22} h={15}><path d="M1 9l8-4 10 3-8 6z" fill="#dfeafa" stroke="#5274ad" /><path d="M1 9v2l10 4v-2z" fill="#4a6fb0" /><path d="M7 6l4 4 8-9" stroke="#3d5fae" strokeWidth="2.200" /></Icon>
          </StatusButton>
          <Divider />
          <Spacer />
          <Divider />
          <StatusButton $w={25} $active aria-label="Normal view"><Icon w={16} h={11}><path d="M1 1h14v9H1zM6 1v9M6 7h9" fill="#fff" stroke="#5b5746" strokeWidth="1.300" /></Icon></StatusButton>
          <StatusButton $w={23} aria-label="Slide sorter"><Icon w={14} h={11}><path d="M1 1h4v3H1zM8 1h5v3H8zM1 7h4v3H1zM8 7h5v3H8z" stroke="#53607a" strokeWidth="1.300" /></Icon></StatusButton>
          <StatusButton $w={23} aria-label="Reading view"><Icon w={15} h={12}><path d="M7.500 2C5 .5 3 .5 1 1v9c2-.5 4-.5 6.500 1 2.500-1.500 4.500-1.500 6.500-1V1c-2-.5-4-.5-6.500 1v9M3 4h3M3 6h3M9 4h3M9 6h3" stroke="#53607a" /></Icon></StatusButton>
          <StatusButton $w={24} aria-label="Slide show"><Icon w={14} h={12}><path d="M0 1h14M2 1v6h10V1M7 7v4M3 11h8" stroke="#53607a" strokeWidth="1.300" /></Icon></StatusButton>
          <StatusButton $w={48}>69%</StatusButton>
          <StatusButton $w={22} aria-label="Zoom out"><Icon w={20} h={15}><ellipse cx="10" cy="7.500" rx="9" ry="6.500" fill="#f4f8fd" stroke="#667da3" /><path d="M6 7.500h8" stroke="#3c4a66" strokeWidth="2" /></Icon></StatusButton>
          <Zoom type="range" aria-label="Zoom" min={0} max={100} defaultValue={33} />
          <StatusButton $w={22} aria-label="Zoom in"><Icon w={20} h={15}><ellipse cx="10" cy="7.500" rx="9" ry="6.500" fill="#f4f8fd" stroke="#667da3" /><path d="M6 7.500h8M10 4v7" stroke="#3c4a66" strokeWidth="2" /></Icon></StatusButton>
          <StatusButton $w={36} aria-label="Fit slide to window">
            <Icon w={20} h={15}><rect x="1" y="1" width="18" height="13" rx="2" fill="#e6e8ee" stroke="#4f5a70" strokeWidth="1.500" /><path d="M10 2v4M10 9v4M3 7.500h4M13 7.500h4M8.500 4L10 2l1.500 2M8.500 11l1.500 2 1.500-2M5 6L3 7.500 5 9M15 6l2 1.500L15 9" stroke="#4f5a70" /></Icon>
          </StatusButton>
        </StatusBar>

        <Taskbar>
          <TaskButton $w={66} aria-label="Start"><StartIcon /></TaskButton>
          <TaskButton $w={85} aria-label="Internet Explorer"><IeIcon /></TaskButton>
          <TaskButton $w={74} $open aria-label="Windows Explorer"><FolderIcon /></TaskButton>
          <TaskButton $w={81} aria-label="Media Player"><MediaIcon /></TaskButton>
          <TaskButton $w={68} $open aria-label="PowerPoint"><PptIcon /></TaskButton>
          <StackEdge />
          <Tray>
            {tray.map(([name, w, art]) => <TaskButton key={name} $w={w} aria-label={name}><Icon w={20} h={17}>{art}</Icon></TaskButton>)}
            <Clock><span>8:30 AM</span><span>9/18/2011</span></Clock>
            <ShowDesktop aria-label="Show desktop" />
          </Tray>
        </Taskbar>
      </Window>
    </>
  );
}
